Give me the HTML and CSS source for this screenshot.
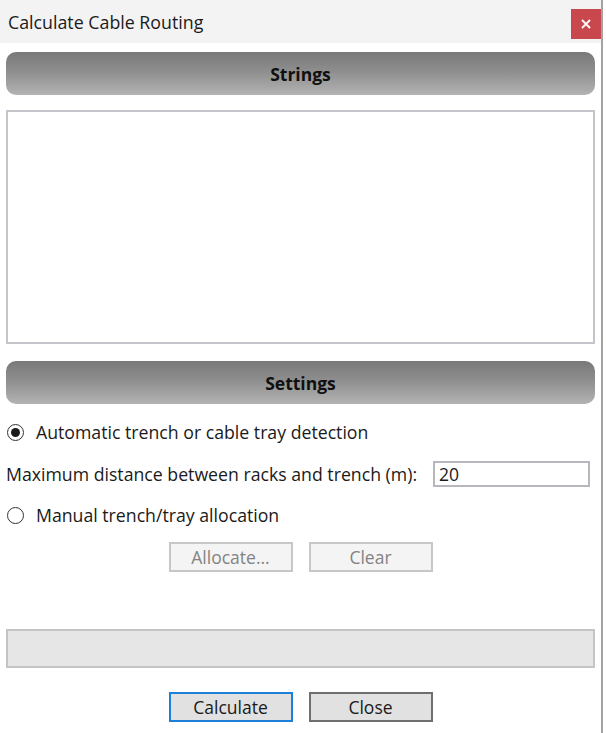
FILE: index.html
```html
<!DOCTYPE html>
<html lang="en">
  <head>
    <meta charset="UTF-8" />
    <meta name="viewport" content="width=device-width, initial-scale=1.0" />
    <title>Calculate Cable Routing</title>
    <link rel="stylesheet" href="styles.css">
  </head>

  <body>
    <div class="window">
      <div class="title-bar">
        <span class="title">Calculate Cable Routing</span>
        <button class="close-x" aria-label="Close">
          <svg width="10" height="10" viewBox="0 0 10 10">
            <path d="M1 1 L9 9 M9 1 L1 9" stroke="#fff" stroke-width="1.8" />
          </svg>
        </button>
      </div>

      <div class="content">
        <div class="section-header">Strings</div>
        <div class="list-box"></div>

        <div class="section-header settings">Settings</div>

        <label class="radio-row first">
          <span class="radio checked"></span>
          <span>Automatic trench or cable tray detection</span>
        </label>

        <div class="field-row">
          <span>Maximum distance between racks and trench (m):</span>
          <input class="text-input" type="text" value="20" />
        </div>

        <label class="radio-row">
          <span class="radio"></span>
          <span>Manual trench/tray allocation</span>
        </label>

        <div class="button-row">
          <button class="btn" disabled>Allocate...</button>
          <button class="btn" disabled>Clear</button>
        </div>

        <div class="progress"></div>

        <div class="button-row bottom">
          <button class="btn default">Calculate</button>
          <button class="btn dark">Close</button>
        </div>
      </div>
    </div>
  </body>
</html>
```

FILE: styles.css
```css
body {
  margin: 0;
  background: #ffffff;
  font-family: "Open Sans", "Noto Sans", sans-serif;
  color: #1a1a1a;
}

.window {
  width: 601px;
  height: 733px;
  border-right: 2px solid #a3a3a3;
  background: #ffffff;
}

.title-bar {
  height: 43px;
  background: #f3f3f3;
  display: flex;
  align-items: center;
  justify-content: space-between;
  padding-left: 8px;
}

.title {
  font-size: 17.8px;
  color: #1b1b1b;
}

.close-x {
  width: 30px;
  height: 30px;
  margin-top: 5px;
  border: none;
  padding: 0;
  background: #c8484d;
  display: flex;
  align-items: center;
  justify-content: center;
}

.content {
  padding: 9px 6px 0 6px;
  display: flex;
  flex-direction: column;
}

.section-header {
  height: 43px;
  border-radius: 10px;
  background: linear-gradient(to bottom, #797979, #8e8e8e 45%, #b3b3b3);
  display: flex;
  align-items: center;
  justify-content: center;
  font-weight: bold;
  font-size: 17.5px;
  color: #101010;
}

.section-header.settings {
  margin-top: 17px;
}

.list-box {
  margin-top: 15px;
  height: 230px;
  border: 2px solid #c4c4ca;
  background: #ffffff;
}

.radio-row {
  display: flex;
  align-items: center;
  gap: 12px;
  height: 26px;
  font-size: 17.7px;
  margin-left: 1px;
}

.radio-row.first {
  margin-top: 15px;
}

.radio {
  width: 15px;
  height: 15px;
  border: 1px solid #333333;
  border-radius: 50%;
  display: flex;
  align-items: center;
  justify-content: center;
  background: #ffffff;
}

.radio.checked::after {
  content: "";
  width: 9px;
  height: 9px;
  border-radius: 50%;
  background: #1a1a1a;
}

.field-row {
  display: flex;
  align-items: center;
  gap: 16px;
  margin-top: 16px;
  font-size: 17.7px;
}

.text-input {
  width: 145px;
  height: 22px;
  border: 2px solid #b7b7bd;
  padding: 0 4px;
  font-family: inherit;
  font-size: 17.5px;
  color: #1a1a1a;
}

.field-row + .radio-row {
  margin-top: 15px;
}

.button-row {
  display: flex;
  justify-content: center;
  gap: 16px;
  margin-top: 14px;
}

.btn {
  width: 124px;
  height: 30px;
  background: #e1e1e1;
  border: 2px solid #adadad;
  font-family: inherit;
  font-size: 17.5px;
  color: #1a1a1a;
  padding: 0;
}

.btn:disabled {
  background: #f4f4f4;
  border-color: #c7c7c7;
  color: #838383;
}

.btn.default {
  border-color: #1e7fd8;
}

.btn.dark {
  border-color: #6f6f6f;
}

.progress {
  margin-top: 57px;
  height: 35px;
  background: #e6e6e6;
  border: 2px solid #c4c4c4;
}

.button-row.bottom {
  margin-top: 24px;
}
```
